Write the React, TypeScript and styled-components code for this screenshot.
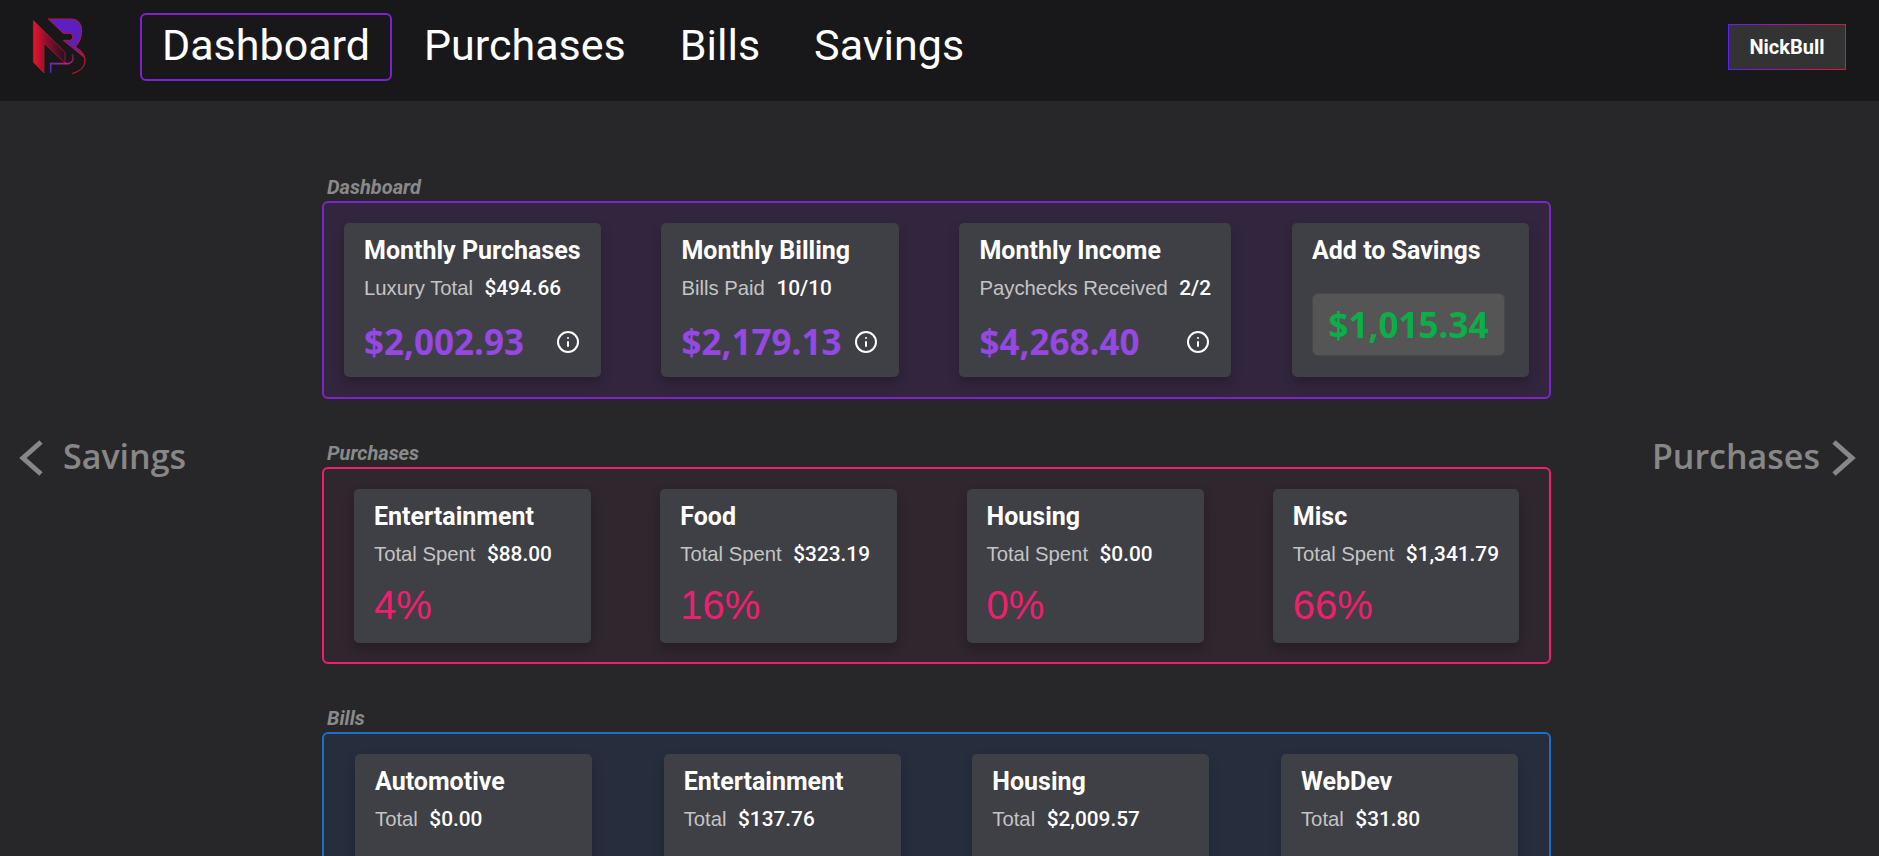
import React from "react";
import styled, { createGlobalStyle } from "styled-components";
import { Info } from "lucide-react";

const GlobalStyle = createGlobalStyle`
  html, body {
    margin: 0;
    height: 100%;
    overflow: hidden;
    background: #27272a;
    font-family: Roboto, "Liberation Sans", sans-serif;
  }
`;

const Page = styled.div`
  height: 100vh;
  overflow: hidden;
  display: flex;
  flex-direction: column;
`;

const Header = styled.header`
  flex: none;
  height: 101px;
  box-sizing: border-box;
  background: #18181b;
  display: flex;
  align-items: center;
  padding: 0 33px 7px 20px;
`;

const LogoBox = styled.svg`
  flex: none;
  width: 80px;
  height: 80px;
  margin: 0 45px 0 -5px;
`;

const NavList = styled.nav`
  display: flex;
  gap: 10px;
  flex: 1;
`;

const NavItem = styled.a<{ $active?: boolean }>`
  box-sizing: border-box;
  height: 68px;
  display: flex;
  align-items: center;
  padding: 0 20px 5px;
  color: #fff;
  font-size: 43px;
  border: 2px solid ${(p) => (p.$active ? "#7e22ce" : "transparent")};
  border-radius: 6px;
`;

const UserButton = styled.button`
  width: 118px;
  height: 46px;
  box-sizing: border-box;
  background: #333;
  color: #fff;
  font-family: Roboto, sans-serif;
  font-weight: 700;
  font-size: 20px;
  border: 1px solid;
  border-image: linear-gradient(90deg, #5b21f6, #f0102e) 1;
`;

const Body = styled.main`
  flex: 1;
  display: grid;
  grid-template-columns: 322px 1229px 1fr;
  min-height: 0;
`;

const SideLink = styled.a<{ $right?: boolean }>`
  display: flex;
  align-self: start;
  align-items: center;
  justify-content: ${(p) => (p.$right ? "flex-end" : "flex-start")};
  gap: ${(p) => (p.$right ? "12px" : "20px")};
  margin-top: 333px;
  padding: 0 ${(p) => (p.$right ? "23px" : "0")} 0 ${(p) => (p.$right ? "0" : "19px")};
  color: #878787;
  font-family: "Open Sans", sans-serif;
  font-weight: 600;
  font-size: 34px;
  line-height: 44px;
`;

const Chevron = styled.svg`
  flex: none;
  width: 24px;
  height: 38px;
  margin-top: 3px;
`;

const Column = styled.div`
  padding-top: 74px;
`;

const Section = styled.section`
  margin-bottom: 42px;
`;

const SectionLabel = styled.div`
  height: 26px;
  line-height: 24px;
  padding-left: 5px;
  color: #8a8a8a;
  font-style: italic;
  font-weight: 700;
  font-size: 20px;
`;

const Panel = styled.div<{ $border: string; $fill: string; $inset: number }>`
  box-sizing: border-box;
  height: 197.5px;
  display: flex;
  justify-content: space-between;
  padding: 20px ${(p) => p.$inset}px;
  background: ${(p) => p.$fill};
  border: 2px solid ${(p) => p.$border};
  border-radius: 6px;
`;

const Card = styled.div`
  box-sizing: border-box;
  height: 154px;
  display: flex;
  flex-direction: column;
  padding: 13px 20px 0;
  background: #3f3f46;
  border-radius: 5px;
  box-shadow: 0 6px 12px rgba(0, 0, 0, 0.22);
`;

const SmallCard = styled(Card)`
  min-width: 237px;
`;

const CardTitle = styled.div`
  color: #fff;
  font-weight: 700;
  font-size: 25px;
  line-height: 30px;
  white-space: nowrap;
`;

const CardRow = styled.div`
  display: flex;
  align-items: baseline;
  gap: 11.5px;
  margin-top: 9px;
  line-height: 26px;
  white-space: nowrap;
`;

const RowLabel = styled.span`
  color: #c4c4c4;
  font-family: "Liberation Sans", Arial, sans-serif;
  font-size: 20.3px;
`;

const RowValue = styled.span`
  color: #fff;
  font-weight: 500;
  font-size: 20.8px;
`;

const AmountRow = styled.div`
  display: flex;
  align-items: center;
  justify-content: space-between;
  gap: 12px;
  margin-top: 18px;
`;

const Amount = styled.span`
  color: #9548e2;
  font-family: "Open Sans", sans-serif;
  font-weight: 700;
  font-size: 35px;
  line-height: 46px;
`;

const InfoButton = styled.span`
  display: flex;
  margin-right: 1px;
  color: #fff;
`;

const Percent = styled.div`
  margin-top: 15px;
  color: #f01e6e;
  font-family: "Liberation Sans", Arial, sans-serif;
  font-size: 40px;
  line-height: 46px;
`;

const SavingsField = styled.div`
  box-sizing: border-box;
  width: 193px;
  height: 63px;
  margin: 27px 4px 0 0;
  display: flex;
  align-items: center;
  justify-content: center;
  padding-bottom: 1px;
  background: #555;
  border: 1px solid #484848;
  border-radius: 6px;
  color: #0bae47;
  font-family: "Open Sans", sans-serif;
  font-weight: 700;
  font-size: 35px;
`;

const Logo = () => (
  <LogoBox viewBox="0 0 240 240">
    <defs>
      <linearGradient id="blade" x1="0" y1="0" x2="1" y2="0">
        <stop offset="0" stopColor="#e8152b" />
        <stop offset="0.4" stopColor="#8e1030" />
        <stop offset="1" stopColor="#241222" />
      </linearGradient>
      <linearGradient id="bowl" x1="0" y1="0" x2="1" y2="1">
        <stop offset="0" stopColor="#5a1fd0" />
        <stop offset="1" stopColor="#5f1fa8" />
      </linearGradient>
      <linearGradient id="loop" x1="0" y1="1" x2="1" y2="0">
        <stop offset="0" stopColor="#3a2bd0" />
        <stop offset="0.6" stopColor="#c0208a" />
        <stop offset="1" stopColor="#6a1840" />
      </linearGradient>
    </defs>
    <path d="M55 40 L150 136 L150 168 L87 109 L87 198 L55 166 Z" fill="url(#blade)" stroke="#c8182c" strokeWidth="2" />
    <path
      d="M100 36 H170 Q200 38 200 71 Q199 102 182 118 L209 152 L145 100 H168 Q178 90 168 79 H145 Z"
      fill="url(#bowl)"
      stroke="#b8183a"
      strokeWidth="3"
      strokeLinejoin="round"
    />
    <path d="M190 126 Q212 142 210 165 Q206 190 172 200" fill="none" stroke="#b81430" strokeWidth="4" />
    <path d="M107 197 V170 H160 Q180 165 172 142" fill="none" stroke="url(#loop)" strokeWidth="5" />
  </LogoBox>
);

const dashboardCards = [
  { title: "Monthly Purchases", label: "Luxury Total", value: "$494.66", amount: "$2,002.93" },
  { title: "Monthly Billing", label: "Bills Paid", value: "10/10", amount: "$2,179.13" },
  { title: "Monthly Income", label: "Paychecks Received", value: "2/2", amount: "$4,268.40" },
];

const purchaseCards = [
  { title: "Entertainment", value: "$88.00", percent: "4%" },
  { title: "Food", value: "$323.19", percent: "16%" },
  { title: "Housing", value: "$0.00", percent: "0%" },
  { title: "Misc", value: "$1,341.79", percent: "66%" },
];

const billCards = [
  { title: "Automotive", value: "$0.00" },
  { title: "Entertainment", value: "$137.76" },
  { title: "Housing", value: "$2,009.57" },
  { title: "WebDev", value: "$31.80" },
];

export default function App() {
  return (
    <Page>
      <GlobalStyle />
      <Header>
        <Logo />
        <NavList>
          <NavItem $active>Dashboard</NavItem>
          <NavItem>Purchases</NavItem>
          <NavItem>Bills</NavItem>
          <NavItem>Savings</NavItem>
        </NavList>
        <UserButton>NickBull</UserButton>
      </Header>
      <Body>
        <SideLink>
          <Chevron viewBox="0 0 24 38">
            <polyline points="22,3 4,19 22,35" fill="none" stroke="#878787" strokeWidth="5" />
          </Chevron>
          Savings
        </SideLink>
        <Column>
          <Section>
            <SectionLabel>Dashboard</SectionLabel>
            <Panel $border="#7e22ce" $fill="#32263e" $inset={20}>
              {dashboardCards.map((card) => (
                <Card key={card.title}>
                  <CardTitle>{card.title}</CardTitle>
                  <CardRow>
                    <RowLabel>{card.label}</RowLabel>
                    <RowValue>{card.value}</RowValue>
                  </CardRow>
                  <AmountRow>
                    <Amount>{card.amount}</Amount>
                    <InfoButton>
                      <Info size={24} strokeWidth={2} />
                    </InfoButton>
                  </AmountRow>
                </Card>
              ))}
              <Card>
                <CardTitle>Add to Savings</CardTitle>
                <SavingsField>$1,015.34</SavingsField>
              </Card>
            </Panel>
          </Section>
          <Section>
            <SectionLabel>Purchases</SectionLabel>
            <Panel $border="#f01e6e" $fill="#30262e" $inset={30}>
              {purchaseCards.map((card) => (
                <SmallCard key={card.title}>
                  <CardTitle>{card.title}</CardTitle>
                  <CardRow>
                    <RowLabel>Total Spent</RowLabel>
                    <RowValue>{card.value}</RowValue>
                  </CardRow>
                  <Percent>{card.percent}</Percent>
                </SmallCard>
              ))}
            </Panel>
          </Section>
          <Section>
            <SectionLabel>Bills</SectionLabel>
            <Panel $border="#1d6fc7" $fill="#262e3e" $inset={31}>
              {billCards.map((card) => (
                <SmallCard key={card.title}>
                  <CardTitle>{card.title}</CardTitle>
                  <CardRow>
                    <RowLabel>Total</RowLabel>
                    <RowValue>{card.value}</RowValue>
                  </CardRow>
                </SmallCard>
              ))}
            </Panel>
          </Section>
        </Column>
        <SideLink $right>
          Purchases
          <Chevron viewBox="0 0 24 38">
            <polyline points="2,3 20,19 2,35" fill="none" stroke="#878787" strokeWidth="5" />
          </Chevron>
        </SideLink>
      </Body>
    </Page>
  );
}
